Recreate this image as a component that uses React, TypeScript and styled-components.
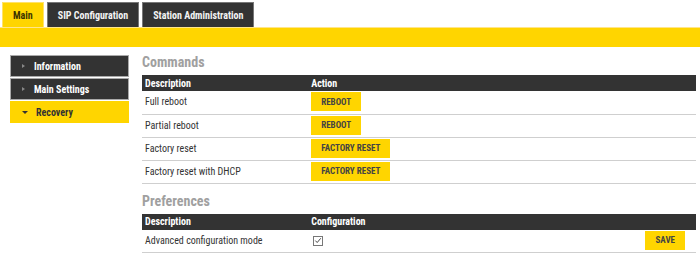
import React from "react";
import styled, { createGlobalStyle } from "styled-components";

const YELLOW = "#ffd500";
const DARK = "#333333";
const FONT = `"Liberation Sans Narrow", "Roboto Condensed", "DejaVu Sans Condensed", "Liberation Sans", sans-serif`;

const GlobalStyle = createGlobalStyle`
  body {
    margin: 0;
    background: #fff;
    font-family: ${FONT};
    color: ${DARK};
  }
`;

const commands = [
  { label: "Full reboot", action: "Reboot" },
  { label: "Partial reboot", action: "Reboot" },
  { label: "Factory reset", action: "Factory reset" },
  { label: "Factory reset with DHCP", action: "Factory reset" },
];

const menu = [
  { label: "Information", active: false },
  { label: "Main Settings", active: false },
  { label: "Recovery", active: true },
];

export default function App() {
  return (
    <>
      <GlobalStyle />
      <TabBar>
        <Tab $active>Main</Tab>
        <Tab>SIP Configuration</Tab>
        <Tab>Station Administration</Tab>
      </TabBar>
      <SubBar />

      <Layout>
        <Sidebar>
          {menu.map((m) => (
            <MenuItem key={m.label} $active={m.active}>
              <Arrow $open={m.active} />
              {m.label}
            </MenuItem>
          ))}
        </Sidebar>

        <Content>
          <SectionTitle>Commands</SectionTitle>
          <Table>
            <thead>
              <tr>
                <HeadCell style={{ width: "30%" }}>Description</HeadCell>
                <HeadCell>Action</HeadCell>
              </tr>
            </thead>
            <tbody>
              {commands.map((c) => (
                <tr key={c.label}>
                  <Cell>{c.label}</Cell>
                  <Cell>
                    <ActionButton>{c.action}</ActionButton>
                  </Cell>
                </tr>
              ))}
            </tbody>
          </Table>

          <SectionTitle $spaced>Preferences</SectionTitle>
          <Table>
            <thead>
              <tr>
                <HeadCell style={{ width: "30%" }}>Description</HeadCell>
                <HeadCell>Configuration</HeadCell>
                <HeadCell />
              </tr>
            </thead>
            <tbody>
              <tr>
                <Cell>Advanced configuration mode</Cell>
                <Cell>
                  <CheckBox>
                    <svg width="9" height="9" viewBox="0 0 9 9">
                      <path d="M1.5 4.6 L3.6 6.8 L7.6 2" fill="none" stroke="#444" strokeWidth="1.1" />
                    </svg>
                  </CheckBox>
                </Cell>
                <SaveCell>
                  <ActionButton>Save</ActionButton>
                </SaveCell>
              </tr>
            </tbody>
          </Table>
        </Content>
      </Layout>
    </>
  );
}

const TabBar = styled.div`
  display: flex;
  gap: 3px;
  padding: 2px 2px 0;
  height: 27px;
  box-sizing: border-box;
`;

const Tab = styled.div<{ $active?: boolean }>`
  display: flex;
  align-items: center;
  padding: 0 10px;
  font-size: 10px;
  font-weight: 700;
  box-sizing: border-box;
  height: 25px;
  background: ${(p) => (p.$active ? YELLOW : DARK)};
  color: ${(p) => (p.$active ? "#3a3300" : "#f4f4f4")};
  border: 1px solid ${(p) => (p.$active ? "#ffe26a" : "#777")};
  border-bottom: none;
`;

const SubBar = styled.div`
  height: 19px;
  background: ${YELLOW};
  border-top: 1px solid #ffe58a;
`;

const Layout = styled.div`
  display: grid;
  grid-template-columns: 119px 1fr;
  column-gap: 13px;
  padding: 6px 4px 0 10px;
  align-items: start;
`;

const Sidebar = styled.nav`
  display: flex;
  flex-direction: column;
  gap: 1px;
  margin-top: 2px;
`;

const MenuItem = styled.div<{ $active?: boolean }>`
  display: flex;
  align-items: center;
  height: 22px;
  box-sizing: border-box;
  padding-left: 11px;
  font-size: 10px;
  font-weight: 700;
  background: ${(p) => (p.$active ? YELLOW : DARK)};
  color: ${(p) => (p.$active ? DARK : "#fff")};
  border: 1px solid ${(p) => (p.$active ? YELLOW : "#aaa")};
`;

const Arrow = styled.span<{ $open?: boolean }>`
  width: 0;
  height: 0;
  margin-right: ${(p) => (p.$open ? "8px" : "9px")};
  ${(p) =>
    p.$open
      ? `border-left: 3px solid transparent;
         border-right: 3px solid transparent;
         border-top: 3px solid ${DARK};`
      : `border-top: 2.5px solid transparent;
         border-bottom: 2.5px solid transparent;
         border-left: 3px solid #888;`}
`;

const Content = styled.main`
  min-width: 0;
`;

const SectionTitle = styled.h2<{ $spaced?: boolean }>`
  margin: ${(p) => (p.$spaced ? "8px 0 4px" : "0 0 4px")};
  font-size: 14px;
  line-height: 18px;
  font-weight: 700;
  color: #a0a0a0;
`;

const Table = styled.table`
  width: 100%;
  border-collapse: collapse;
  font-size: 10px;
`;

const HeadCell = styled.th`
  background: ${DARK};
  color: #fff;
  font-weight: 700;
  text-align: left;
  height: 16px;
  padding: 0 3px;
  box-sizing: border-box;
`;

const Cell = styled.td`
  height: 23px;
  padding: 1px 3px 2px;
  box-sizing: border-box;
  border-bottom: 1px solid #cfcfcf;
  vertical-align: middle;
`;

const SaveCell = styled(Cell)`
  text-align: right;
  padding-right: 11px;
`;

const ActionButton = styled.button`
  height: 19px;
  padding: 0 10px;
  border: none;
  background: ${YELLOW};
  color: #444;
  font-family: ${FONT};
  font-size: 9px;
  font-weight: 700;
  text-transform: uppercase;
  cursor: pointer;
  vertical-align: middle;
`;

const CheckBox = styled.span`
  display: inline-flex;
  align-items: center;
  justify-content: center;
  width: 10px;
  height: 10px;
  box-sizing: border-box;
  border: 1px solid #777;
  margin-left: 2px;
  vertical-align: middle;
`;
